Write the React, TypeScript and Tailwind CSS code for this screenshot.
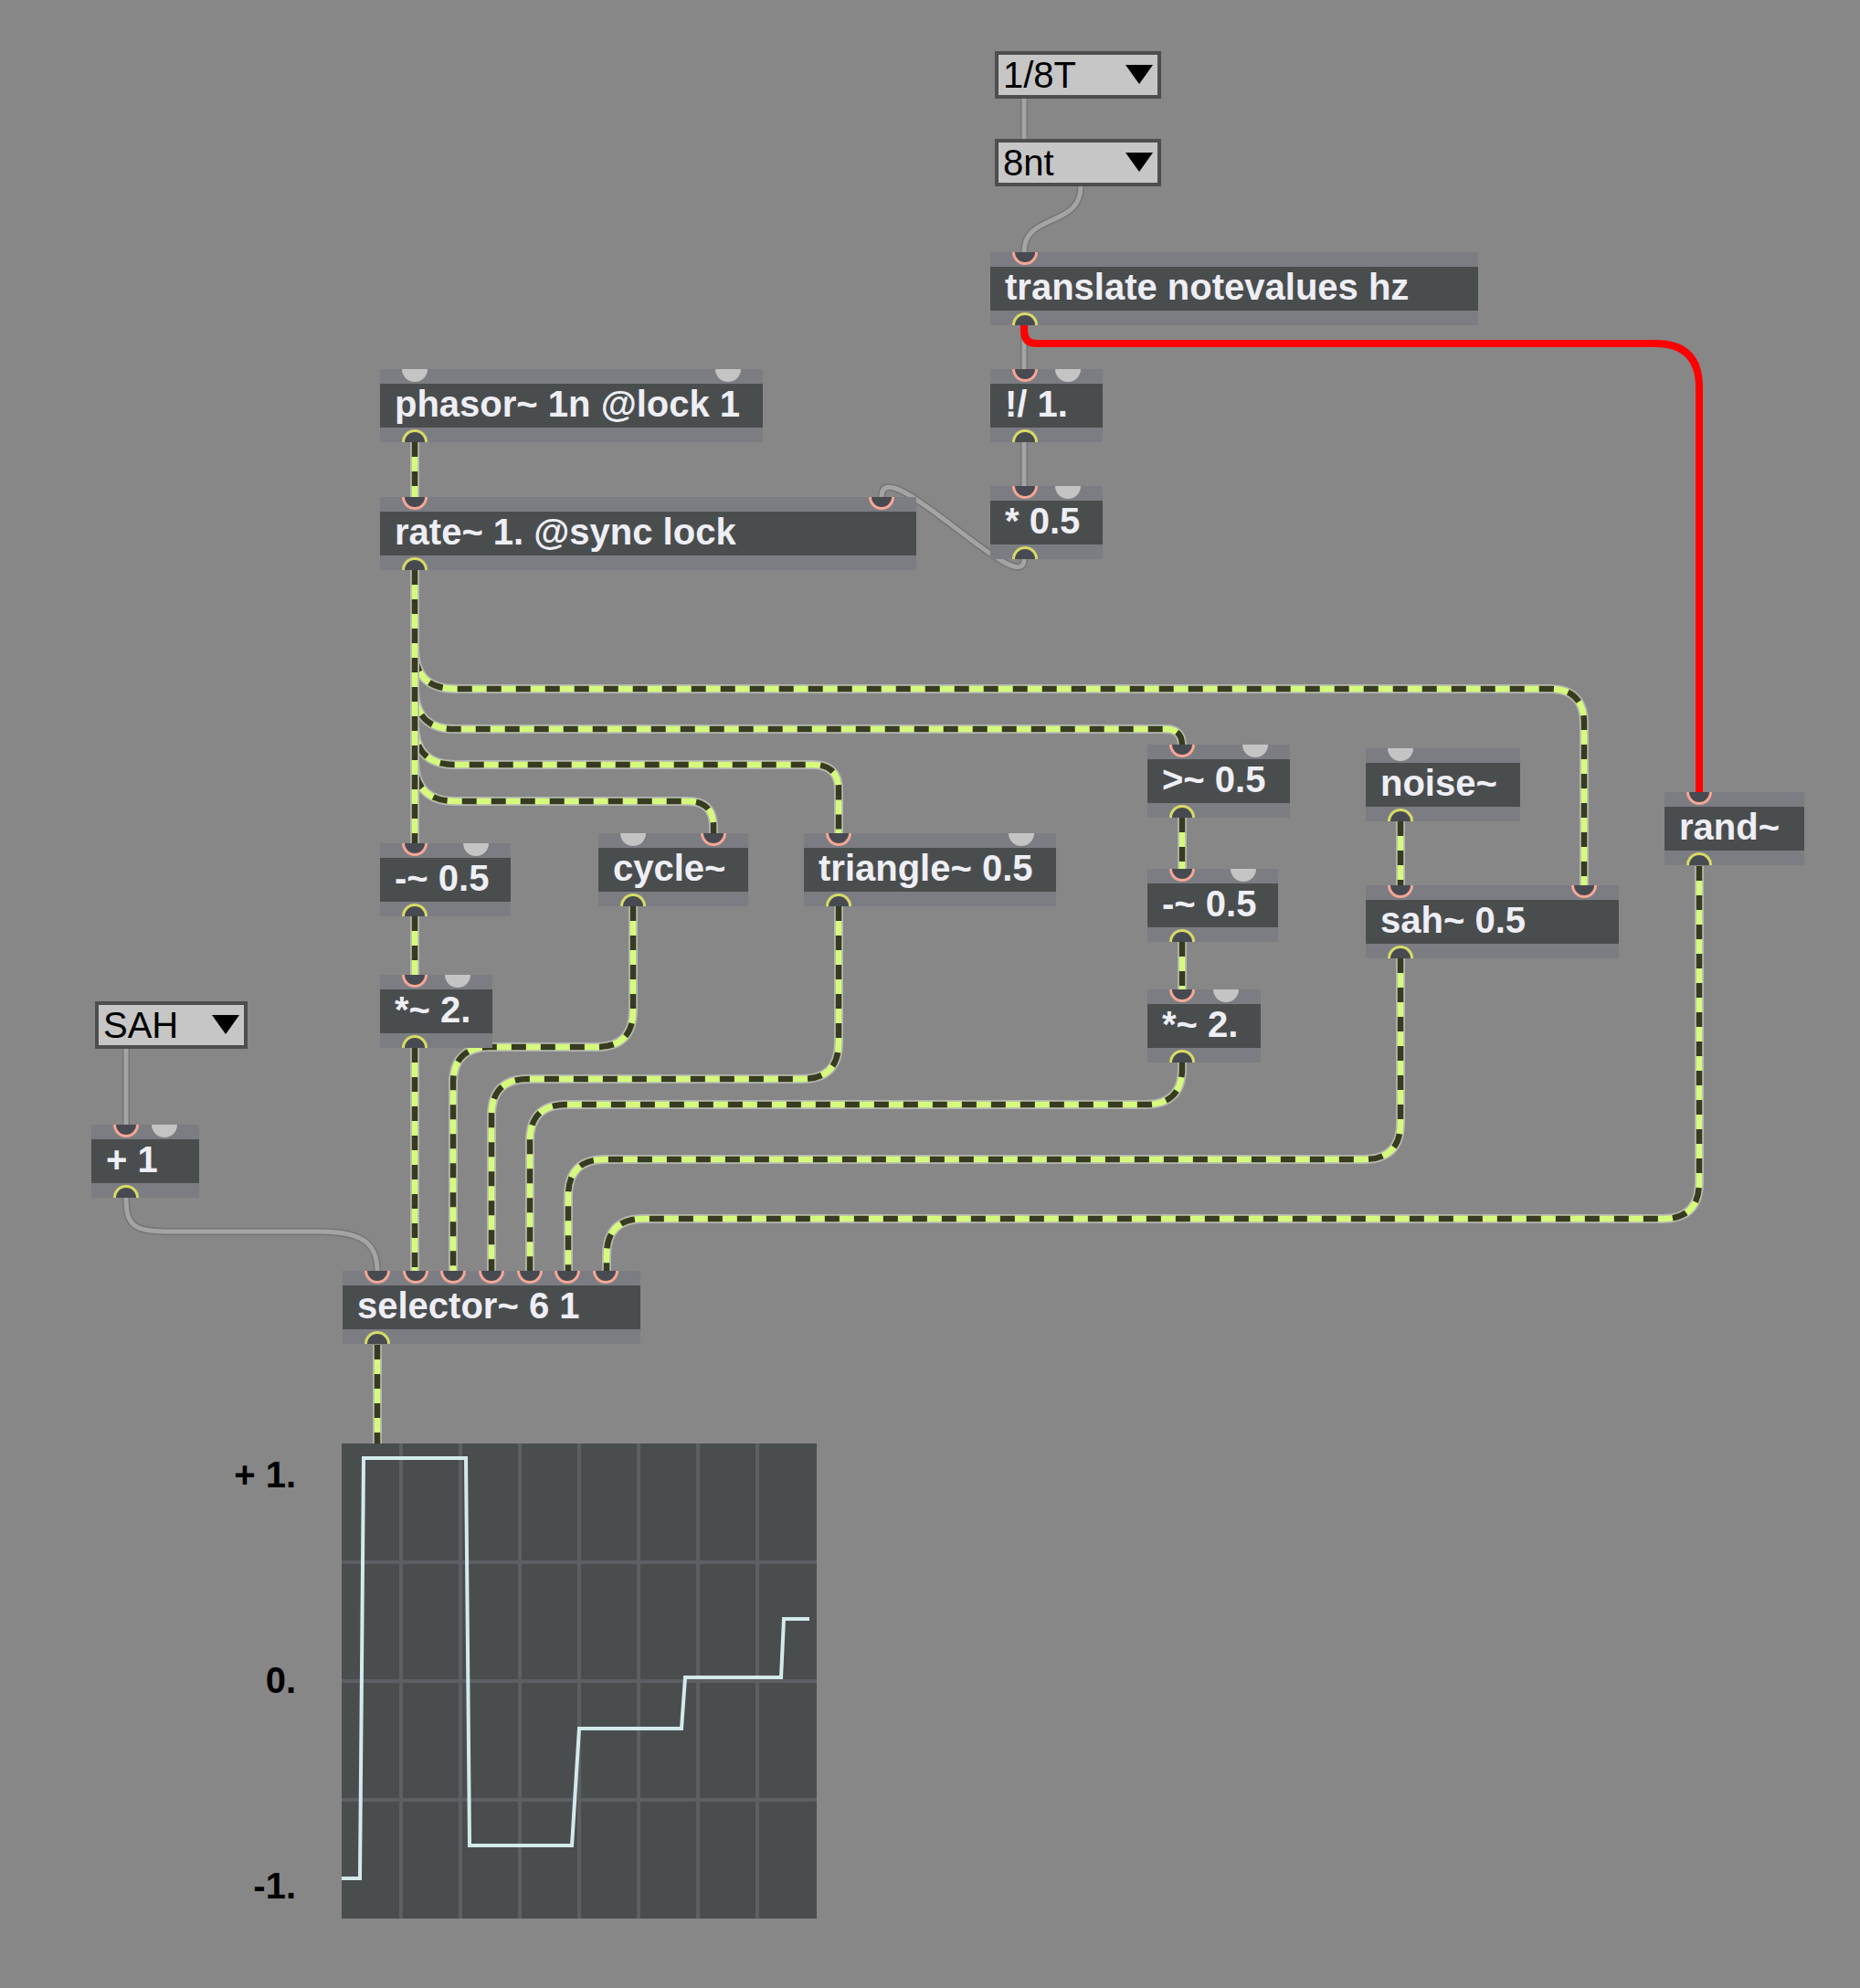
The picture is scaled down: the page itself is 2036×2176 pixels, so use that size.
import React from "react";

type Port = "on" | "off";

type Box = {
  x: number;
  y: number;
  w: number;
  text: string;
  ins: Port[];
};

const boxes: Box[] = [
  { x: 1084, y: 276, w: 534, text: "translate notevalues hz", ins: ["on"] },
  { x: 416, y: 404, w: 419, text: "phasor~ 1n @lock 1", ins: ["off", "off"] },
  { x: 1084, y: 404, w: 123, text: "!/ 1.", ins: ["on", "off"] },
  { x: 416, y: 544, w: 587, text: "rate~ 1. @sync lock", ins: ["on", "on"] },
  { x: 1084, y: 532, w: 123, text: "* 0.5", ins: ["on", "off"] },
  { x: 1256, y: 815, w: 156, text: ">~ 0.5", ins: ["on", "off"] },
  { x: 1495, y: 819, w: 169, text: "noise~", ins: ["off"] },
  { x: 1822, y: 867, w: 153, text: "rand~", ins: ["on"] },
  { x: 416, y: 923, w: 143, text: "-~ 0.5", ins: ["on", "off"] },
  { x: 655, y: 912, w: 164, text: "cycle~", ins: ["off", "on"] },
  { x: 880, y: 912, w: 276, text: "triangle~ 0.5", ins: ["on", "off"] },
  { x: 1256, y: 951, w: 143, text: "-~ 0.5", ins: ["on", "off"] },
  { x: 1495, y: 969, w: 277, text: "sah~ 0.5", ins: ["on", "on"] },
  { x: 416, y: 1067, w: 123, text: "*~ 2.", ins: ["on", "off"] },
  { x: 1256, y: 1083, w: 124, text: "*~ 2.", ins: ["on", "off"] },
  { x: 100, y: 1231, w: 118, text: "+ 1", ins: ["on", "off"] },
  { x: 375, y: 1391, w: 326, text: "selector~ 6 1", ins: ["on", "on", "on", "on", "on", "on", "on"] },
];

const menus = [
  { x: 1089, y: 56, w: 182, label: "1/8T" },
  { x: 1089, y: 152, w: 182, label: "8nt" },
  { x: 104, y: 1096, w: 167, label: "SAH" },
];

// rate~ outlet fans out to four objects
const branch = (h: number, tx: number, ty: number, r2: number) =>
  `M454 624 V${h - 44} Q454 ${h} 498 ${h} H${tx - r2} Q${tx} ${h} ${tx} ${h + r2} V${ty}`;

// outlet on the right, inlet of selector~ further left
const toSelector = (sx: number, sy: number, h: number, tx: number) =>
  `M${sx} ${sy} V${h - 40} Q${sx} ${h} ${sx - 40} ${h} H${tx + 40} Q${tx} ${h} ${tx} ${h + 40} V1392`;

const signalCords = [
  "M454 484 V544",
  branch(754, 1734, 969, 38),
  branch(798, 1294, 816, 18),
  branch(837, 918, 912, 28),
  branch(877, 781, 912, 28),
  "M454 624 V923",
  "M454 1003 V1067",
  "M454 1147 V1392",
  toSelector(693, 992, 1146, 496),
  toSelector(918, 992, 1181, 538),
  toSelector(1294, 1163, 1209, 580),
  toSelector(1533, 1049, 1269, 622),
  toSelector(1860, 948, 1334, 664),
  "M1533 899 V969",
  "M1294 895 V951",
  "M1294 1031 V1083",
  "M413 1472 V1580",
];

const controlCords = [
  "M1121 108 V152",
  "M1183 204 C1183 250 1121 232 1121 276",
  "M1121 356 V404",
  "M1121 484 V532",
  "M1121 612 C1121 660 965 490 965 544",
  "M138 1148 V1231",
  "M138 1312 C138 1345 150 1348 190 1348 L350 1348 C398 1348 413 1362 413 1391",
];

const trace: [number, number][] = [
  [0, 476], [20, 476], [24, 16], [136, 16], [140, 440], [252, 440],
  [260, 312], [372, 312], [376, 256], [481, 256], [484, 192], [512, 192],
];

function Signal({ d }: { d: string }) {
  return (
    <g fill="none">
      <path d={d} stroke="#b5b5b5" strokeWidth={10} />
      <path d={d} stroke="#d6fb7c" strokeWidth={6.5} />
      <path d={d} stroke="#363b21" strokeWidth={6.5} strokeDasharray="16 16" />
    </g>
  );
}

function Control({ d }: { d: string }) {
  return (
    <g fill="none" strokeLinecap="round">
      <path d={d} stroke="#757575" strokeWidth={8} />
      <path d={d} stroke="#a4a4a4" strokeWidth={5} />
    </g>
  );
}

function MaxObject({ b }: { b: Box }) {
  const n = b.ins.length;
  const step = n > 1 ? (b.w - 76) / (n - 1) : 0;
  return (
    <div className="absolute h-[80px] flex flex-col" style={{ left: b.x, top: b.y, width: b.w }}>
      <div className="h-[16px] bg-[#7c7d82]" />
      <div className="h-[48px] bg-[#4a4d4e] pl-[16px] text-[40px] leading-[44px] font-bold text-[#eeeef5] whitespace-nowrap">
        {b.text}
      </div>
      <div className="h-[16px] bg-[#7c7d82]" />
      {b.ins.map((p, i) => (
        <div
          key={i}
          className={
            p === "on"
              ? "absolute top-0 w-[28px] h-[14px] rounded-b-full bg-[#474a51] border-[3px] border-t-0 border-[#f4a797]"
              : "absolute top-0 w-[28px] h-[14px] rounded-b-full bg-[#c4c4c5]"
          }
          style={{ left: 24 + i * step }}
        />
      ))}
      <div className="absolute bottom-0 left-[24px] w-[28px] h-[14px] rounded-t-full bg-[#474a51] border-[3px] border-b-0 border-[#d7db68]" />
    </div>
  );
}

function Menu({ x, y, w, label }: { x: number; y: number; w: number; label: string }) {
  return (
    <div
      className="absolute h-[52px] border-4 border-[#4e4e4e] bg-[#c6c6c6] flex items-center justify-between pl-[5px] pr-[5px]"
      style={{ left: x, top: y, width: w }}
    >
      <span className="text-[40px] leading-[44px] text-black">{label}</span>
      <svg width="30" height="22" viewBox="0 0 30 22">
        <polygon points="0,0 30,0 15,21" fill="#000" />
      </svg>
    </div>
  );
}

function Scope() {
  const cols = [65, 130, 195, 260, 325, 390, 455];
  const rows = [130, 260, 390];
  return (
    <div className="absolute left-[200px] top-[1580px] flex gap-[50px]">
      <div className="w-[124px] flex flex-col items-end pt-[10px] gap-[177px] text-[40px] leading-[48px] font-bold text-black">
        <span>+ 1.</span>
        <span>0.</span>
        <span>-1.</span>
      </div>
      <div className="w-[520px] h-[520px] bg-[#4a4d4e]">
        <svg width="520" height="520" viewBox="0 0 520 520" className="block">
          {cols.map((c) => (
            <line key={"c" + c} x1={c} y1={0} x2={c} y2={520} stroke="#5e5f64" strokeWidth={4} />
          ))}
          {rows.map((r) => (
            <line key={"r" + r} x1={0} y1={r} x2={520} y2={r} stroke="#5e5f64" strokeWidth={4} />
          ))}
          <polyline
            points={trace.map((p) => p.join(",")).join(" ")}
            fill="none"
            stroke="#d3eaec"
            strokeWidth={4}
            strokeLinejoin="miter"
          />
        </svg>
      </div>
    </div>
  );
}

export default function App() {
  return (
    <div className="relative w-[2036px] h-[2176px] bg-[#878787] overflow-hidden font-['Liberation_Sans',Arial,sans-serif]">
      <svg className="absolute inset-0" width="2036" height="2176" viewBox="0 0 2036 2176">
        {controlCords.map((d, i) => (
          <Control key={i} d={d} />
        ))}
        {signalCords.map((d, i) => (
          <Signal key={i} d={d} />
        ))}
        <path
          d="M1121 356 V362 Q1121 376 1135 376 H1812 Q1860 376 1860 424 V868"
          fill="none"
          stroke="#ff0000"
          strokeWidth={8}
        />
      </svg>

      {menus.map((m) => (
        <Menu key={m.label} {...m} />
      ))}
      {boxes.map((b, i) => (
        <MaxObject key={i} b={b} />
      ))}

      <Scope />
    </div>
  );
}
